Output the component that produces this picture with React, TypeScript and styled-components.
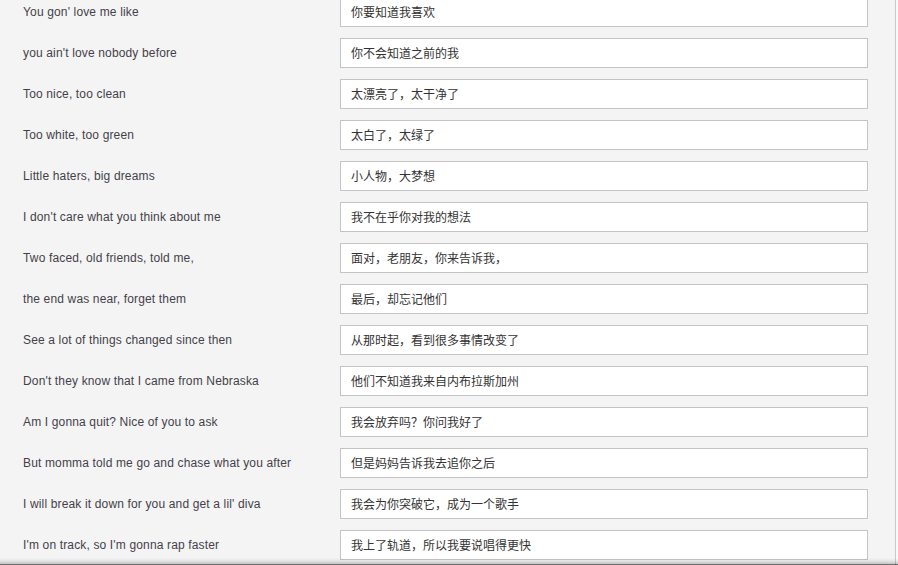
import React from "react";
import styled, { createGlobalStyle } from "styled-components";

const GlobalStyle = createGlobalStyle`
  html, body {
    margin: 0;
    padding: 0;
    background: #f4f4f4;
    overflow: hidden;
  }
`;

const Frame = styled.div`
  width: 898px;
  height: 565px;
  display: flex;
  overflow: hidden;
  position: relative;
  background: #f4f4f4;
`;

const Sheet = styled.div`
  width: 896px;
  border-right: 1px solid #c9c9c9;
  box-sizing: border-box;
  display: flex;
  flex-direction: column;
  gap: 11px;
  margin-top: -3px;
`;

const Edge = styled.div`
  flex: 1;
  background: #f9f9f9;
`;

const Row = styled.div`
  display: flex;
  align-items: center;
  height: 30px;
`;

const Label = styled.div`
  width: 340px;
  padding-left: 23px;
  box-sizing: border-box;
  font-family: "Liberation Sans", Arial, sans-serif;
  font-size: 12px;
  letter-spacing: 0.15px;
  color: #443f4a;
  white-space: nowrap;
`;

const Field = styled.div`
  width: 528px;
  height: 30px;
  box-sizing: border-box;
  border: 1px solid #c4c4c4;
  background: #fff;
  padding-left: 10px;
  padding-bottom: 1px;
  display: flex;
  align-items: center;
  font-family: "Noto Sans CJK SC", "Liberation Sans", sans-serif;
  font-size: 12px;
  color: #333;
  white-space: nowrap;
`;

const BottomShade = styled.div`
  position: absolute;
  left: 0;
  right: 0;
  bottom: 0;
  height: 7px;
  background: linear-gradient(
    to bottom,
    rgba(0, 0, 0, 0) 0%,
    rgba(0, 0, 0, 0.06) 40%,
    rgba(0, 0, 0, 0.18) 80%,
    rgba(0, 0, 0, 0.75) 100%
  );
  pointer-events: none;
`;

const lines: [string, string][] = [
  ["You gon' love me like", "你要知道我喜欢"],
  ["you ain't love nobody before", "你不会知道之前的我"],
  ["Too nice, too clean", "太漂亮了，太干净了"],
  ["Too white, too green", "太白了，太绿了"],
  ["Little haters, big dreams", "小人物，大梦想"],
  ["I don't care what you think about me", "我不在乎你对我的想法"],
  ["Two faced, old friends, told me,", "面对，老朋友，你来告诉我，"],
  ["the end was near, forget them", "最后，却忘记他们"],
  ["See a lot of things changed since then", "从那时起，看到很多事情改变了"],
  ["Don't they know that I came from Nebraska", "他们不知道我来自内布拉斯加州"],
  ["Am I gonna quit? Nice of you to ask", "我会放弃吗？你问我好了"],
  ["But momma told me go and chase what you after", "但是妈妈告诉我去追你之后"],
  ["I will break it down for you and get a lil' diva", "我会为你突破它，成为一个歌手"],
  ["I'm on track, so I'm gonna rap faster", "我上了轨道，所以我要说唱得更快"],
];

export default function App() {
  return (
    <Frame>
      <GlobalStyle />
      <Sheet>
        {lines.map(([en, zh]) => (
          <Row key={en}>
            <Label>{en}</Label>
            <Field>{zh}</Field>
          </Row>
        ))}
      </Sheet>
      <Edge />
      <BottomShade />
    </Frame>
  );
}
